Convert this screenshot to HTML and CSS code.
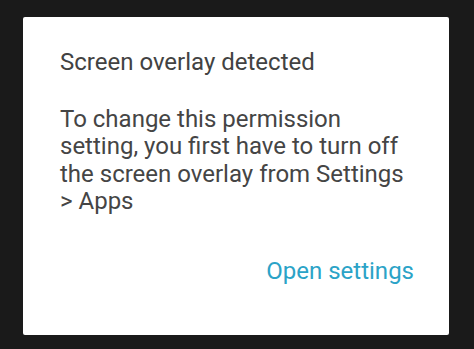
FILE: index.html
```html
<!DOCTYPE html>
<html>
<head>
<meta charset="utf-8">
<link rel="stylesheet" href="styles.css">
</head>
<body>
<div class="dialog">
  <div class="title">Screen overlay detected</div>
  <div class="message">To change this permission setting, you first have to turn off the screen overlay from Settings &gt; Apps</div>
  <div class="actions"><span class="button">Open settings</span></div>
</div>
</body>
</html>
```
FILE: styles.css
```css
html, body {
  margin: 0;
  padding: 0;
  background: #1a1a1a;
}
body {
  padding: 17px 25px 14px 23px;
  width: 474px;
  height: 349px;
  box-sizing: border-box;
  font-family: Roboto, "Noto Sans", sans-serif;
}
.dialog {
  background: #ffffff;
  border-radius: 2px;
  height: 318px;
  box-sizing: border-box;
  padding: 30.8px 35px 0 37px;
  display: flex;
  flex-direction: column;
}
.title {
  font-size: 24px;
  line-height: 28px;
  color: #424242;
}
.message {
  margin-top: 29.75px;
  font-size: 24px;
  line-height: 27.5px;
  color: #454545;
  width: 348px;
}
.actions {
  margin-top: 41.5px;
  display: flex;
  justify-content: flex-end;
}
.button {
  font-size: 24px;
  line-height: 28px;
  color: #2ba3c7;
}
```
